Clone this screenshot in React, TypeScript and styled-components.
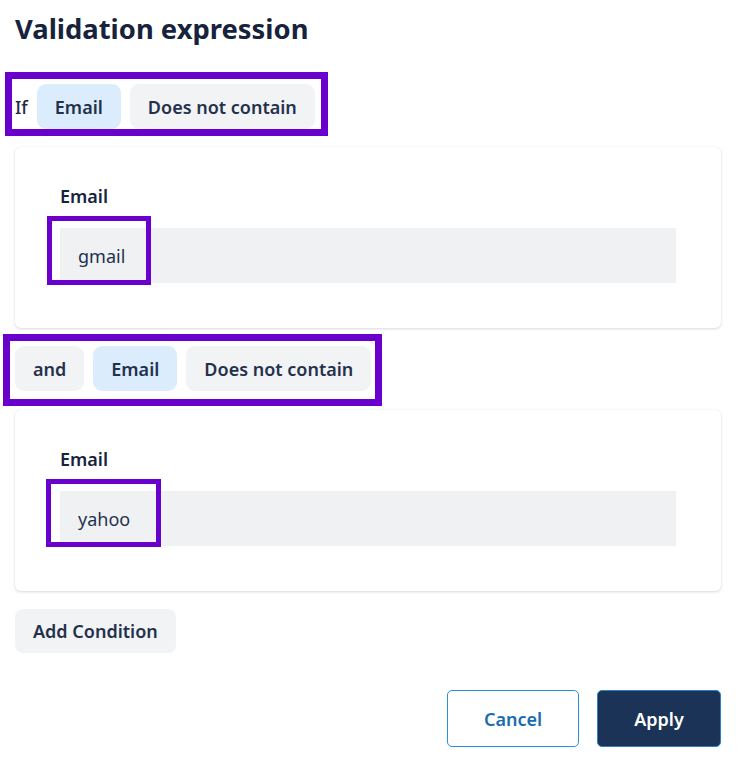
import React from "react";
import styled, { createGlobalStyle } from "styled-components";

const Global = createGlobalStyle`
  html, body { margin: 0; padding: 0; background: #ffffff; }
  body { font-family: "Noto Sans", "Open Sans", sans-serif; color: #1c2943; }
  * { box-sizing: border-box; }
`;

const Page = styled.div`
  width: 741px;
  padding: 10px 20px 0 15px;
  display: flex;
  flex-direction: column;
`;

const Title = styled.h1`
  margin: 0;
  font-size: 27.4px;
  line-height: 38px;
  font-weight: 700;
  color: #17233d;
`;

const Row = styled.div<{ $mt: number }>`
  position: relative;
  align-self: flex-start;
  display: flex;
  align-items: center;
  gap: 9px;
  margin-top: ${(p) => p.$mt}px;
`;

const Word = styled.span`
  font-size: 18px;
  font-weight: 500;
  color: #1f2b45;
`;

const Chip = styled.div<{ $tone: "blue" | "grey" }>`
  height: 45px;
  padding: 0 18px;
  display: flex;
  align-items: center;
  border-radius: 9px;
  font-size: 18px;
  font-weight: 600;
  color: #24314d;
  background: ${(p) => (p.$tone === "blue" ? "#dbedfc" : "#f2f3f5")};
`;

const Card = styled.div<{ $mt: number }>`
  margin-top: ${(p) => p.$mt}px;
  background: #fff;
  border-radius: 6px;
  box-shadow: 0 1px 3px rgba(40, 50, 90, 0.18), 0 0 1px rgba(40, 50, 90, 0.08);
  padding: 37px 45px 45px 45px;
  display: flex;
  flex-direction: column;
  gap: 19px;
`;

const Label = styled.div`
  font-size: 18px;
  line-height: 25px;
  font-weight: 600;
  color: #17233d;
`;

const Field = styled.div`
  position: relative;
  height: 55px;
  background: #f0f1f3;
  padding-left: 18px;
  display: flex;
  align-items: center;
  font-size: 18px;
  color: #24314d;
`;

const Highlight = styled.div<{ $t: number; $l: number; $w: number; $h: number; $b: number }>`
  position: absolute;
  top: ${(p) => p.$t}px;
  left: ${(p) => p.$l}px;
  width: ${(p) => p.$w}px;
  height: ${(p) => p.$h}px;
  border: ${(p) => p.$b}px solid #6a00cc;
  pointer-events: none;
`;

const AddButton = styled.button`
  margin-top: 18px;
  align-self: flex-start;
  height: 44px;
  padding: 0 18px;
  border: none;
  border-radius: 8px;
  background: #f2f3f5;
  font-family: inherit;
  font-size: 18px;
  font-weight: 600;
  color: #24314d;
`;

const Footer = styled.div`
  margin-top: 37px;
  display: flex;
  justify-content: flex-end;
  gap: 18px;
`;

const ActionButton = styled.button<{ $primary?: boolean }>`
  height: 57px;
  width: ${(p) => (p.$primary ? 124 : 132)}px;
  border-radius: 5px;
  border: 1px solid ${(p) => (p.$primary ? "#2a7fc9" : "#2a91dc")};
  background: ${(p) => (p.$primary ? "#1b3356" : "#ffffff")};
  color: ${(p) => (p.$primary ? "#ffffff" : "#1a6cb0")};
  font-family: inherit;
  font-size: 18px;
  font-weight: 600;
`;

export default function App() {
  return (
    <>
      <Global />
      <Page>
        <Title>Validation expression</Title>

        <Row $mt={36}>
          <Word>If</Word>
          <Chip $tone="blue">Email</Chip>
          <Chip $tone="grey">Does not contain</Chip>
          <Highlight $t={-12} $l={-10} $w={323} $h={64} $b={7} />
        </Row>

        <Card $mt={18}>
          <Label>Email</Label>
          <Field>
            gmail
            <Highlight $t={-12} $l={-13} $w={104} $h={69} $b={5} />
          </Field>
        </Card>

        <Row $mt={18}>
          <Chip $tone="grey">and</Chip>
          <Chip $tone="blue">Email</Chip>
          <Chip $tone="grey">Does not contain</Chip>
          <Highlight $t={-12} $l={-12} $w={379} $h={72} $b={7} />
        </Row>

        <Card $mt={19}>
          <Label>Email</Label>
          <Field>
            yahoo
            <Highlight $t={-12} $l={-14} $w={115} $h={68} $b={5} />
          </Field>
        </Card>

        <AddButton>Add Condition</AddButton>

        <Footer>
          <ActionButton>Cancel</ActionButton>
          <ActionButton $primary>Apply</ActionButton>
        </Footer>
      </Page>
    </>
  );
}
